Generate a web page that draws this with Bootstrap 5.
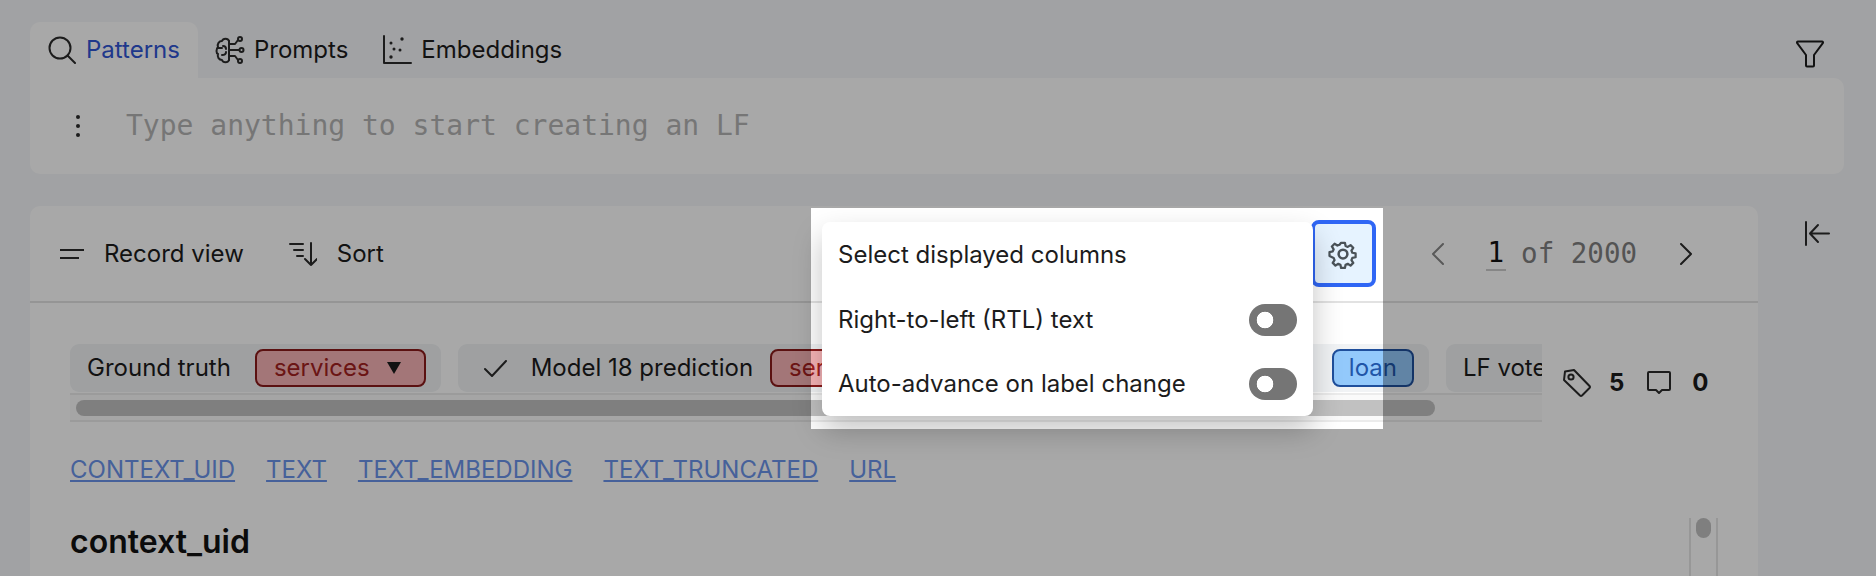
<!DOCTYPE html>
<html lang="en">
<head>
  <meta charset="UTF-8">
  <title>Record view</title>
  <link rel="stylesheet" href="https://cdn.jsdelivr.net/npm/bootstrap@5.3.3/dist/css/bootstrap.min.css">
  <style>
    html, body { height: 576px; overflow: hidden; }
    body { background: #f5f6f9; color: #1c1c1c; font-family: Inter, "Liberation Sans", sans-serif; font-size: 24px; line-height: 1.3; }
    svg { display: block; flex-shrink: 0; fill: none; stroke: #2b2b2b; stroke-width: 2; stroke-linecap: round; stroke-linejoin: round; }
    .mono-text { font-family: "DejaVu Sans Mono", "Liberation Mono", monospace; }

    .page-wrap { position: relative; height: 576px; padding: 22px 32px 0 30px; overflow: hidden; }
    .tab-row { height: 56px; }
    .tab-item { height: 56px; padding: 0 17px; gap: 9px; color: #1c1c1c; }
    .tab-item.is-active { background: #fff; border-radius: 10px 10px 0 0; color: #2f55d4; padding: 0 18px 0 18px; gap: 10px; }
    .filter-btn { margin-right: 20px; margin-top: 8px; }
    .search-panel { background: #fff; border-radius: 0 10px 10px 10px; height: 96px; padding-left: 45px; margin-bottom: 32px; }
    .search-hint { font-size: 28px; color: #b4b4b4; margin-left: 45px; }

    .record-card { width: 1728px; height: 400px; background: #fff; border-radius: 10px 10px 0 0; }
    .record-head { height: 97px; padding: 0 65px 0 30px; border-bottom: 2px solid #e2e2e2; }
    .head-btn { gap: 20px; }
    .sort-btn { margin-left: 45px; }
    .gear-btn { width: 65px; height: 67px; border: 4px solid #2f66f5; border-radius: 8px; background: #e6f3ff; }
    .pager-text { font-size: 27.500px; color: #808080; margin: 0 43px; }
    .pager-now { color: #111; border-bottom: 2px solid #ccc; padding: 0 2px; margin: 0 15px 0 -1px; line-height: 1.2; }

    .record-body { padding: 41px 40px 0 40px; }
    .strip-box { width: 1472px; }
    .chip-strip { gap: 17px; overflow: hidden; }
    .field-chip { flex-shrink: 0; height: 48px; padding: 0 15px 0 17px; background: #f1f3f5; border-radius: 9px; }
    .tag-pill { height: 38px; padding: 0 17px; border: 2px solid #8a1a1a; border-radius: 8px; background: #f7b4b6; color: #a32020; flex-shrink: 0; }
    .tag-blue { border-color: #1f4f9c; background: #93c9fb; color: #1f55a8; padding: 0 15px; }
    .caret-down { width: 0; height: 0; border: 7.500px solid transparent; border-top: 12px solid #1c1c1c; border-bottom: 0; margin: 0 6px 0 17px; }
    .chip-label-wide { width: 361px; text-align: right; white-space: nowrap; overflow: hidden; }
    .hscroll-track { height: 29px; margin-top: 1px; background: #fafafa; border-top: 2px solid #ececec; border-bottom: 2px solid #ececec; padding: 5px 0 0 6px; }
    .hscroll-thumb { width: 1359px; height: 16px; border-radius: 8px; background: #c1c1c1; }
    .meta-counts { margin-left: 21px; height: 78px; font-weight: 700; color: #1a1a1a; }

    .jump-links { gap: 31px; margin-top: 32px; }
    .jump-links a { color: #6b93ea; }
    .field-title { font-size: 32px; font-weight: 600; margin: 38px 0 0; color: #111; }
    .vscroll-track { position: absolute; left: 1689px; top: 518px; width: 29px; height: 70px; border-left: 2px solid #e6e6e6; border-right: 2px solid #e6e6e6; padding: 0 5px; }
    .vscroll-thumb { height: 20px; border-radius: 8px; background: #c1c1c1; }
    .collapse-btn { margin-left: 47px; margin-top: 15px; }

    .columns-menu { position: absolute; left: 822px; top: 222px; width: 491px; height: 194px; background: #fff; border-radius: 8px; box-shadow: 0 14px 30px rgba(0,0,0,.24); padding: 0 16px; z-index: 10; color: #1c1c1c; }
    .menu-line { height: 64px; white-space: nowrap; }
    .menu-line-first { height: 66px; }
    .form-check-input.dark-switch { width: 48px; height: 32px; margin: 0; border: 0; float: none; background-color: #757575; background-image: radial-gradient(circle at 16px 16px, #fff 8px, transparent 8.600px); background-size: auto; background-position: 0 0; border-radius: 16px; }
    .spot-hole { position: absolute; left: 811px; top: 208px; width: 572px; height: 221px; box-shadow: 0 0 0 3000px rgba(0,0,0,.34); z-index: 20; pointer-events: none; }
  </style>
</head>
<body>
  <div class="page-wrap">
    <div class="tab-row d-flex align-items-center">
      <div class="tab-item is-active d-flex align-items-center">
        <svg width="28" height="28" viewBox="0 0 28 28" stroke-width="1.600"><circle cx="12" cy="12" r="10.500"/><path d="M19.500 19.500 27 27"/></svg>
        <span>Patterns</span>
      </div>
      <div class="tab-item d-flex align-items-center">
        <svg width="30" height="30" viewBox="0 0 30 30" stroke-width="1.500"><path d="M14 6c-1-3-6-3-7 0-3 0-5 3-4 6-2 2-2 6 0 7-1 3 1 6 4 6 1 3 6 3 7 0z"/><path d="M14 6v19M8 11c2 0 3 1 3 3M3 13h4M7 20c2 0 4-1 4-3M14 9h6l3-4M14 15h10M14 21h6l3 4"/><circle cx="25" cy="4" r="2"/><circle cx="26.500" cy="15" r="2"/><circle cx="25" cy="26" r="2"/></svg>
        <span>Prompts</span>
      </div>
      <div class="tab-item d-flex align-items-center">
        <svg width="30" height="30" viewBox="0 0 30 30" stroke-width="1.600"><path d="M2 1v27h27"/><g fill="#2b2b2b" stroke="none"><circle cx="9" cy="22" r="1.700"/><circle cx="12" cy="14" r="1.500"/><circle cx="18" cy="15" r="1.500"/><circle cx="20" cy="4" r="1.700"/><circle cx="9" cy="8" r="1.500"/></g></svg>
        <span>Embeddings</span>
      </div>
      <div class="filter-btn ms-auto">
        <svg width="28" height="28" viewBox="0 0 28 28" stroke-width="2.200"><path d="M2 1.500h24a1 1 0 0 1 .8 1.600L18 15v10.500a1 1 0 0 1-1 1h-6a1 1 0 0 1-1-1V15L1.200 3.100A1 1 0 0 1 2 1.500z" stroke="#1c1c1c"/></svg>
      </div>
    </div>
    <div class="search-panel d-flex align-items-center">
      <svg width="6" height="24" viewBox="0 0 6 24" style="stroke:none"><g fill="#2b2b2b"><circle cx="3" cy="3" r="2"/><circle cx="3" cy="12" r="2"/><circle cx="3" cy="21" r="2"/></g></svg>
      <span class="search-hint mono-text">Type anything to start creating an LF</span>
    </div>

    <div class="d-flex align-items-start">
      <div class="record-card">
        <div class="record-head d-flex align-items-center">
          <div class="head-btn d-flex align-items-center">
            <svg width="24" height="12" viewBox="0 0 24 12" stroke-width="3" style="stroke-linecap:butt"><path d="M0 2h24M0 10h19"/></svg>
            <span>Record view</span>
          </div>
          <div class="head-btn sort-btn d-flex align-items-center">
            <svg width="28" height="24" viewBox="0 0 28 24" stroke-width="1.800"><path d="M1 2h13M5 8h9M8 14h6M22 1v22M16 17l6 6 6-6"/></svg>
            <span>Sort</span>
          </div>
          <div class="gear-btn d-flex align-items-center justify-content-center ms-auto">
            <svg width="30" height="30" viewBox="0 0 24 24" stroke-width="1.200" style="stroke:#4a5258"><circle cx="12" cy="12" r="3.500"/><path d="M10.300 2h3.400l.6 2.900 1.900.8 2.500-1.600 2.400 2.400-1.600 2.500.8 1.900 2.900.6v3.400l-2.900.6-.8 1.900 1.600 2.500-2.400 2.400-2.500-1.600-1.900.8-.6 2.900h-3.400l-.6-2.900-1.900-.8-2.500 1.600-2.400-2.400 1.600-2.500-.8-1.900L0 13.700v-3.400l2.900-.6.8-1.900-1.600-2.500 2.400-2.400 2.500 1.600 1.900-.8z" transform="translate(1.200 1.200) scale(.9)"/></svg>
          </div>
          <div class="d-flex align-items-center" style="margin-left:55px">
            <svg width="13" height="22" viewBox="0 0 13 22" stroke-width="1.600" style="stroke:#888"><path d="M12 1 2 11l10 10"/></svg>
            <div class="pager-text mono-text d-flex align-items-center"><span class="pager-now">1</span><span>of 2000</span></div>
            <svg width="13" height="22" viewBox="0 0 13 22" stroke-width="1.600"><path d="M1 1l10 10L1 21"/></svg>
          </div>
        </div>
        <div class="record-body">
          <div class="d-flex align-items-start">
            <div class="strip-box">
              <div class="chip-strip d-flex">
                <div class="field-chip d-flex align-items-center">
                  <span style="margin-right:24px">Ground truth</span>
                  <span class="tag-pill d-flex align-items-center">services<i class="caret-down"></i></span>
                </div>
                <div class="field-chip d-flex align-items-center" style="padding-left:26px">
                  <svg width="23" height="17" viewBox="0 0 23 17" stroke-width="1.500"><path d="M1 9l7 7L22 1"/></svg>
                  <span style="margin:0 17px 0 24px">Model 18 prediction</span>
                  <span class="tag-pill d-flex align-items-center">services</span>
                </div>
                <div class="field-chip d-flex align-items-center">
                  <span class="chip-label-wide" style="margin-right:18px">Training set label</span>
                  <span class="tag-pill tag-blue d-flex align-items-center">loan</span>
                </div>
                <div class="field-chip d-flex align-items-center">
                  <span style="white-space:nowrap">LF votes</span>
                </div>
              </div>
              <div class="hscroll-track"><div class="hscroll-thumb"></div></div>
            </div>
            <div class="meta-counts d-flex align-items-center">
              <svg width="28" height="28" viewBox="0 0 28 28" stroke-width="1.800"><path d="M2 2.500 11 1l15.500 16a1.500 1.500 0 0 1 0 2L19 26.500a1.500 1.500 0 0 1-2 0L1 11z"/><circle cx="8" cy="8" r="2.600"/></svg>
              <span style="margin:0 23px 0 18px">5</span>
              <svg width="24" height="24" viewBox="0 0 24 24" stroke-width="1.800"><path d="M2 1h20a1 1 0 0 1 1 1v16a1 1 0 0 1-1 1h-7l-3 3-3-3H2a1 1 0 0 1-1-1V2a1 1 0 0 1 1-1z"/></svg>
              <span style="margin-left:21px">0</span>
            </div>
          </div>
          <div class="jump-links d-flex">
            <a href="#">CONTEXT_UID</a><a href="#">TEXT</a><a href="#">TEXT_EMBEDDING</a><a href="#">TEXT_TRUNCATED</a><a href="#">URL</a>
          </div>
          <h2 class="field-title">context_uid</h2>
        </div>
      </div>
      <div class="collapse-btn">
        <svg width="25" height="25" viewBox="0 0 25 25" stroke-width="1.600"><path d="M1 1v23M24 12.500H6M13 4l-8 8.500 8 8.500"/></svg>
      </div>
    </div>

    <div class="vscroll-track"><div class="vscroll-thumb"></div></div>

    <div class="columns-menu">
      <div class="menu-line menu-line-first d-flex align-items-center">Select displayed columns</div>
      <div class="menu-line d-flex align-items-center justify-content-between">
        <span>Right-to-left (RTL) text</span>
        <input class="form-check-input dark-switch" type="checkbox" role="switch" aria-label="Right-to-left text">
      </div>
      <div class="menu-line d-flex align-items-center justify-content-between">
        <span>Auto-advance on label change</span>
        <input class="form-check-input dark-switch" type="checkbox" role="switch" aria-label="Auto-advance">
      </div>
    </div>
    <div class="spot-hole"></div>
  </div>
  <script src="https://cdn.jsdelivr.net/npm/bootstrap@5.3.3/dist/js/bootstrap.bundle.min.js"></script>
</body>
</html>
